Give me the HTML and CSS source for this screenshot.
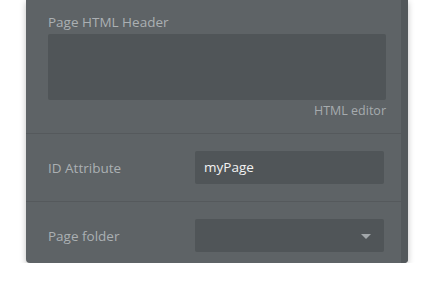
FILE: index.html
```html
<!DOCTYPE html>
<html lang="en">
<head>
    <meta charset="UTF-8">
    <title>Page properties</title>
    <link rel="stylesheet" href="styles.css">
</head>
<body>
    <div class="panel">
        <div class="panel-body">
            <div class="section">
                <div class="label">Page HTML Header</div>
                <div class="code-box"></div>
                <div class="editor-link">HTML editor</div>
            </div>
            <div class="section row">
                <div class="label">ID Attribute</div>
                <div class="field">myPage</div>
            </div>
            <div class="section row last">
                <div class="label">Page folder</div>
                <div class="field select">
                    <span class="caret"></span>
                </div>
            </div>
        </div>
        <div class="scrollbar"></div>
    </div>
</body>
</html>
```

FILE: styles.css
```css
body {
    margin: 0;
    padding: 0;
    background: #fff;
    font-family: 'Open Sans', sans-serif;
}
.panel {
    display: flex;
    width: 382px;
    height: 263px;
    margin-left: 26px;
    background: #5e6366;
    border-radius: 0 0 4px 4px;
    box-shadow: 0 2px 6px rgba(0, 0, 0, 0.25);
    overflow: hidden;
}
.panel-body {
    flex: 1;
}
.scrollbar {
    width: 7px;
    background: #53585b;
}
.section {
    padding: 13px 15px 14px 22px;
    border-bottom: 1px solid #55595c;
}
.section.last {
    border-bottom: none;
}
.label {
    font-size: 13.5px;
    line-height: 18px;
    color: #abb0b3;
}
.code-box {
    margin-top: 3px;
    height: 66px;
    background: #505558;
    border-radius: 2px;
}
.editor-link {
    text-align: right;
    font-size: 12.5px;
    line-height: 16px;
    margin-top: 3px;
    color: #a6abae;
}
.row {
    display: flex;
    align-items: center;
    padding: 17px 17px 17px 22px;
}
.row .label {
    width: 147px;
}
.field {
    flex: 1;
    height: 33px;
    box-sizing: border-box;
    padding-left: 9px;
    background: #505558;
    border-radius: 2px;
    color: #f2f2f2;
    font-size: 13.5px;
    line-height: 32px;
}
.select {
    display: flex;
    justify-content: flex-end;
    align-items: center;
    padding-right: 13px;
}
.caret {
    width: 0;
    height: 0;
    border-left: 5px solid transparent;
    border-right: 5px solid transparent;
    border-top: 5px solid #a2a7aa;
    margin-top: 2px;
}
```
